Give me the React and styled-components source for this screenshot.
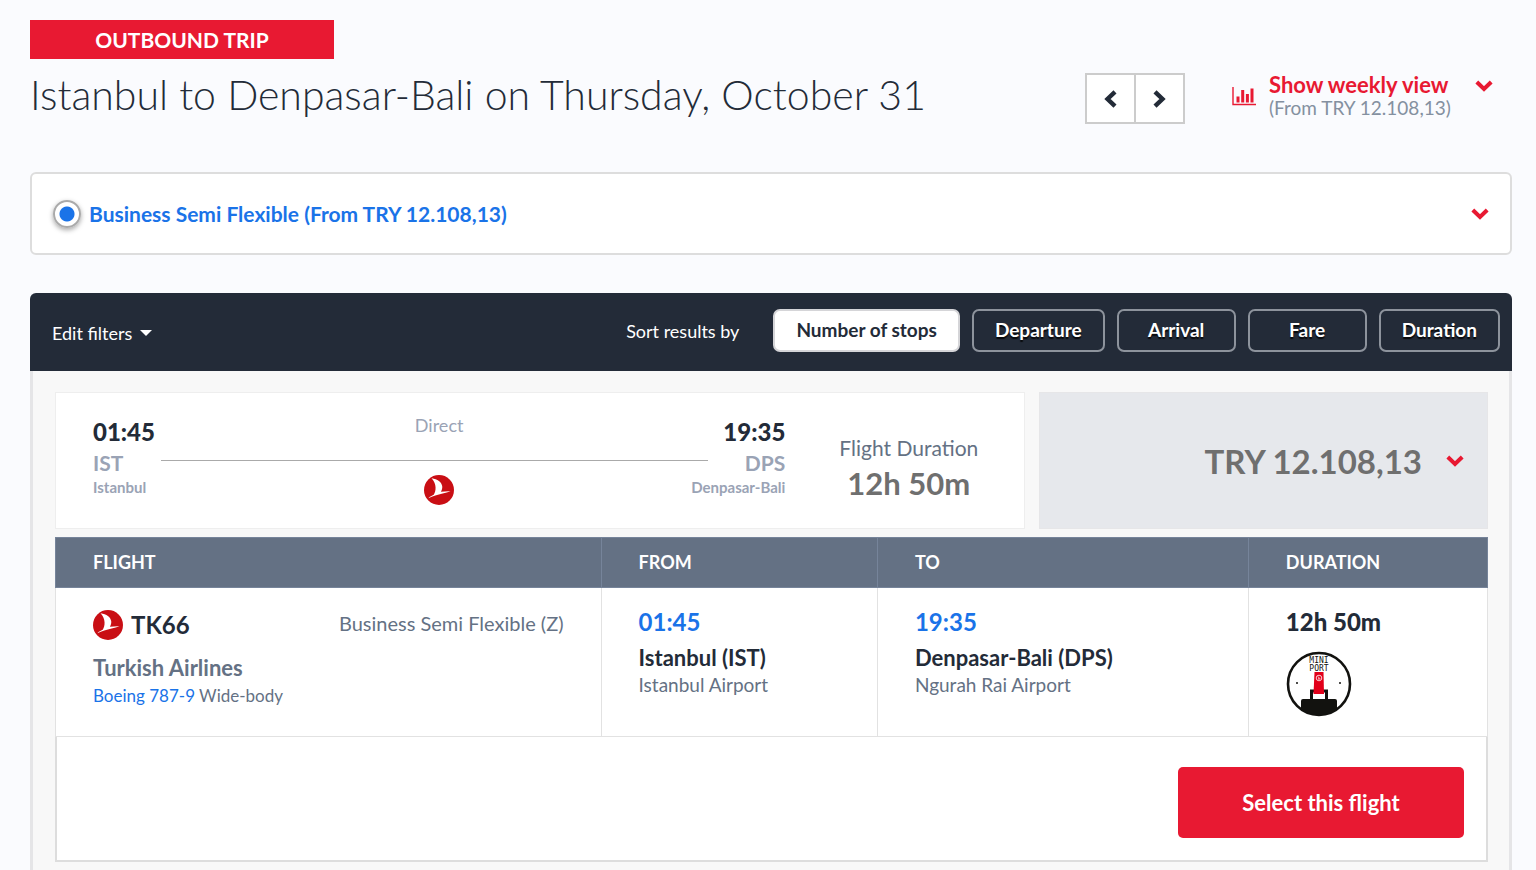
import React, { useState } from 'react';
import styled, { createGlobalStyle, css } from 'styled-components';

const colors = {
    red: '#e81932',
    blue: '#1a73e8',
    navy: '#232b38',
    slate: '#647184',
    muted: '#9aa3b5',
    grey: '#6f6f6f',
};

const sortOptions = ['Number of stops', 'Departure', 'Arrival', 'Fare', 'Duration'];

const ChevronDown = () => (
    <svg width="18" height="12" viewBox="0 0 18 12" aria-hidden="true">
        <path d="M1.8 2 9 9 16.2 2" fill="none" stroke={colors.red} strokeWidth="4" />
    </svg>
);

const ChevronSide = ({ right }) => (
    <svg width="13" height="18" viewBox="0 0 13 18" aria-hidden="true">
        <path
            d={right ? 'M2 1.8 9.5 9 2 16.2' : 'M11 1.8 3.5 9 11 16.2'}
            fill="none"
            stroke={colors.navy}
            strokeWidth="4.4"
        />
    </svg>
);

const ChartIcon = () => (
    <svg width="24" height="19" viewBox="0 0 24 19" aria-hidden="true">
        <path d="M1 0v17.5h23" fill="none" stroke={colors.red} strokeWidth="1.4" />
        <path
            d="M6 15.5v-6M10.7 15.5V3M15.4 15.500V7M20 15.500V1.500"
            fill="none"
            stroke={colors.red}
            strokeWidth="3"
        />
    </svg>
);

const AirlineLogo = () => (
    <svg width="30" height="30" viewBox="0 0 30 30" role="img" aria-label="Turkish Airlines">
        <circle cx="15" cy="15" r="15" fill="#c90e14" />
        <path
            d="M7.6 3.2c6 .8 10 4 10.6 7.8.3 2.2-.3 4-1.3 5.8 3.2-.4 6.3-.8 9.6-.6-2.5.8-5 1.5-7.8 2.3-5.2 1.3-9.7 2.6-14.4 4.7 1.7-1.6 3.5-2.6 5.4-3.4 2.5-3.8 3.2-11-2.1-16.6Z"
            fill="#fff"
        />
    </svg>
);

const MiniPortIcon = () => (
    <svg width="66" height="66" viewBox="0 0 66 66" role="img" aria-label="Mini Port">
        <defs>
            <clipPath id="mini-port-clip">
                <circle cx="33" cy="33" r="31" />
            </clipPath>
        </defs>
        <circle cx="33" cy="33" r="31" fill="#fff" stroke="#12120f" strokeWidth="2.6" />
        <MiniPortText x="33" y="12">MINI</MiniPortText>
        <MiniPortText x="33" y="20">PORT</MiniPortText>
        <path d="M25.5 49V40h15v9" fill="none" stroke="#12120f" strokeWidth="3" />
        <path d="M28.5 21h9l.5 22H27.5Z" fill="#e2001a" />
        <circle cx="33" cy="27" r="2.8" fill="none" stroke="#fff" strokeWidth=".8" />
        <path d="m32 25.500 1.200 1.500-.8 1.200 2-.4" fill="none" stroke="#fff" strokeWidth=".8" />
        <rect x="15" y="48" width="36" height="20" rx="2" fill="#12120f" clipPath="url(#mini-port-clip)" />
        <circle cx="11" cy="32" r="1" fill="#12120f" />
        <circle cx="54" cy="32" r="1" fill="#12120f" />
    </svg>
);

const Header = () => (
    <>
        <TripBadge>OUTBOUND TRIP</TripBadge>
        <HeaderRow>
            <Title>Istanbul to Denpasar-Bali on Thursday, October 31</Title>
            <DayNav>
                <DayButton aria-label="Previous day">
                    <ChevronSide />
                </DayButton>
                <DayButton aria-label="Next day">
                    <ChevronSide right />
                </DayButton>
            </DayNav>
            <WeeklyLink href="#weekly">
                <WeeklyIcon>
                    <ChartIcon />
                </WeeklyIcon>
                <WeeklyText>
                    <strong>Show weekly view</strong>
                    <span>(From TRY 12.108,13)</span>
                </WeeklyText>
                <WeeklyArrow>
                    <ChevronDown />
                </WeeklyArrow>
            </WeeklyLink>
        </HeaderRow>
    </>
);

const FareFilter = () => (
    <FareBox>
        <FareLabel htmlFor="fare-business">
            <Radio id="fare-business" type="radio" name="fare" defaultChecked />
            Business Semi Flexible (From TRY 12.108,13)
        </FareLabel>
        <IconButton aria-label="Show fare options">
            <ChevronDown />
        </IconButton>
    </FareBox>
);

const Toolbar = () => {
    const [sort, setSort] = useState(sortOptions[0]);
    return (
        <ToolbarRow>
            <FilterButton>
                Edit filters
                <Caret />
            </FilterButton>
            <SortLabel>Sort results by</SortLabel>
            <SortGroup>
                {sortOptions.map((option) => (
                    <SortButton key={option} $active={option === sort} onClick={() => setSort(option)}>
                        {option}
                    </SortButton>
                ))}
            </SortGroup>
        </ToolbarRow>
    );
};

const Summary = () => (
    <SummaryRow>
        <RouteCard>
            <Route>
                <Stop>
                    <StopTime>01:45</StopTime>
                    <StopCode>IST</StopCode>
                    <StopCity>Istanbul</StopCity>
                </Stop>
                <Leg>
                    <LegText>Direct</LegText>
                    <LegLine />
                    <LegLogo>
                        <AirlineLogo />
                    </LegLogo>
                </Leg>
                <Stop $end>
                    <StopTime>19:35</StopTime>
                    <StopCode>DPS</StopCode>
                    <StopCity>Denpasar-Bali</StopCity>
                </Stop>
            </Route>
            <Duration>
                <span>Flight Duration</span>
                <strong>12h 50m</strong>
            </Duration>
        </RouteCard>
        <PriceCard>
            TRY 12.108,13
            <ChevronDown />
        </PriceCard>
    </SummaryRow>
);

const FlightDetails = () => (
    <>
        <Table>
            <thead>
                <tr>
                    <Th $width="38.1%">FLIGHT</Th>
                    <Th $width="19.3%">FROM</Th>
                    <Th $width="25.9%">TO</Th>
                    <Th $width="16.7%">DURATION</Th>
                </tr>
            </thead>
            <tbody>
                <tr>
                    <Td>
                        <FlightTop>
                            <FlightNumber>
                                <AirlineLogo />
                                TK66
                            </FlightNumber>
                            <FareClass>Business Semi Flexible (Z)</FareClass>
                        </FlightTop>
                        <Airline>Turkish Airlines</Airline>
                        <Aircraft>
                            <a href="#aircraft">Boeing 787-9</a> Wide-body
                        </Aircraft>
                    </Td>
                    <Td>
                        <Time>01:45</Time>
                        <City>Istanbul (IST)</City>
                        <Airport>Istanbul Airport</Airport>
                    </Td>
                    <Td>
                        <Time>19:35</Time>
                        <City>Denpasar-Bali (DPS)</City>
                        <Airport>Ngurah Rai Airport</Airport>
                    </Td>
                    <Td>
                        <TotalTime>12h 50m</TotalTime>
                        <MiniPortIcon />
                    </Td>
                </tr>
            </tbody>
        </Table>
        <Actions>
            <SelectButton>Select this flight</SelectButton>
        </Actions>
    </>
);

const App = () => (
    <>
        <GlobalStyle />
        <Page>
            <Header />
            <FareFilter />
            <Results>
                <Toolbar />
                <ResultsBody>
                    <Summary />
                    <FlightDetails />
                </ResultsBody>
            </Results>
        </Page>
    </>
);
export default App;

const GlobalStyle = createGlobalStyle`
    * {
        box-sizing: border-box;
    }
    body {
        margin: 0;
        background: #fafbfe;
        color: ${colors.navy};
        font-family: Lato, 'Open Sans', sans-serif;
    }
    button {
        font-family: inherit;
        cursor: pointer;
    }
    svg {
        display: block;
        flex-shrink: 0;
    }
`;

const MiniPortText = styled.text`
    font-family: 'DejaVu Sans Mono', monospace;
    font-size: 8px;
    text-anchor: middle;
    fill: #12120f;
`;

const Page = styled.main`
    padding: 20px 24px 0 30px;
`;
const TripBadge = styled.div`
    width: 304px;
    line-height: 39px;
    background: ${colors.red};
    color: white;
    font-size: 21px;
    font-weight: 700;
    text-align: center;
`;
const HeaderRow = styled.header`
    display: flex;
    align-items: flex-start;
    padding: 10px 19px 0 0;
    margin-bottom: 48px;
`;
const Title = styled.h1`
    flex: 1;
    margin: 0;
    font-size: 41px;
    line-height: 52px;
    font-weight: 300;
    white-space: nowrap;
`;
const DayNav = styled.div`
    display: flex;
    margin-top: 4px;
`;
const DayButton = styled.button`
    display: flex;
    align-items: center;
    justify-content: center;
    width: 51px;
    height: 51px;
    padding: 0;
    border: 2px solid #ccc;
    background: white;
    & + & {
        margin-left: -2px;
    }
`;
const WeeklyLink = styled.a`
    display: flex;
    align-items: flex-start;
    margin: 4px 0 0 47px;
    color: ${colors.red};
    text-decoration: none;
`;
const WeeklyIcon = styled.span`
    padding: 14px 13px 0 0;
`;
const WeeklyText = styled.span`
    display: flex;
    flex-direction: column;
    width: 206px;
    font-size: 19px;
    line-height: 23px;
    white-space: nowrap;
    strong {
        font-size: 22px;
        font-weight: 700;
    }
    span {
        color: #8490a0;
    }
`;
const WeeklyArrow = styled.span`
    padding-top: 7px;
`;

const FareBox = styled.section`
    display: flex;
    align-items: center;
    justify-content: space-between;
    height: 83px;
    padding: 0 21px;
    margin-bottom: 38px;
    border: 2px solid #ddd;
    border-radius: 6px;
    background: white;
`;
const FareLabel = styled.label`
    display: flex;
    align-items: center;
    gap: 8px;
    color: ${colors.blue};
    font-size: 21px;
    font-weight: 700;
`;
const Radio = styled.input`
    appearance: none;
    width: 28px;
    height: 28px;
    margin: 0;
    border: 2px solid #aaa;
    border-radius: 50%;
    background: radial-gradient(circle, ${colors.blue} 7px, white 8px);
    box-shadow: 0 2px 5px rgba(0, 0, 0, 0.35);
`;
const IconButton = styled.button`
    padding: 0;
    border: none;
    background: transparent;
`;

const Results = styled.section`
    border-radius: 6px 6px 0 0;
    overflow: hidden;
`;
const ToolbarRow = styled.div`
    display: flex;
    align-items: center;
    height: 78px;
    padding: 0 12px 3px 22px;
    background: ${colors.navy};
    color: white;
`;
const FilterButton = styled.button`
    display: flex;
    align-items: center;
    gap: 8px;
    padding: 4px 0 0;
    margin-right: auto;
    border: none;
    background: transparent;
    color: white;
    font-size: 18px;
    line-height: 24px;
`;
const Caret = styled.span`
    border: 6px solid transparent;
    border-top-color: white;
    border-bottom: none;
`;
const SortLabel = styled.span`
    margin-right: 34px;
    font-size: 18px;
    line-height: 24px;
`;
const SortGroup = styled.div`
    display: flex;
    gap: 12px;
`;
const SortButton = styled.button`
    min-width: 119px;
    height: 43px;
    padding: 0 21px 2px;
    border: 2px solid #8d939c;
    border-radius: 7px;
    background: transparent;
    color: white;
    font-size: 19px;
    font-weight: 700;
    text-shadow: 0 2px 1px rgba(0, 0, 0, 0.8);
    ${({ $active }) =>
        $active &&
        css`
            border-color: #d5d5d8;
            background: white;
            color: ${colors.navy};
            text-shadow: none;
        `}
`;
const ResultsBody = styled.div`
    padding: 21px 21px 9px 22px;
    border: solid #e5e5e7;
    border-width: 0 3px;
    background: #f8f8f8;
`;

const SummaryRow = styled.div`
    display: grid;
    grid-template-columns: 971fr 449fr;
    gap: 14px;
    margin-bottom: 8px;
`;
const RouteCard = styled.div`
    display: flex;
    height: 137px;
    border: 1px solid #eee;
    background: white;
`;
const Route = styled.div`
    display: grid;
    flex: 1;
    grid-template-columns: 68px 1fr 77px;
    padding: 22px 0 0 37px;
`;
const Stop = styled.div`
    display: flex;
    flex-direction: column;
    align-items: ${({ $end }) => ($end ? 'flex-end' : 'flex-start')};
    color: ${colors.muted};
    font-weight: 700;
    white-space: nowrap;
`;
const StopTime = styled.strong`
    color: ${colors.navy};
    font-size: 24px;
    line-height: 34px;
`;
const StopCode = styled.span`
    font-size: 21px;
    line-height: 28px;
`;
const StopCity = styled.span`
    font-size: 15px;
    line-height: 20px;
`;
const Leg = styled.div`
    display: flex;
    flex-direction: column;
`;
const LegText = styled.span`
    padding-left: 9px;
    color: ${colors.muted};
    font-size: 18px;
    line-height: 20px;
    text-align: center;
`;
const LegLine = styled.span`
    margin: 25px 0 14px;
    border-top: 1px solid #aaa;
`;
const LegLogo = styled.span`
    display: flex;
    justify-content: center;
    padding-left: 9px;
`;
const Duration = styled.div`
    display: flex;
    flex-direction: column;
    align-items: center;
    width: 239px;
    padding: 41px 0 0 8px;
    color: ${colors.slate};
    font-size: 21px;
    line-height: 28px;
    strong {
        color: ${colors.grey};
        font-size: 31px;
        line-height: 42px;
    }
`;
const PriceCard = styled.button`
    display: flex;
    align-items: center;
    justify-content: flex-end;
    gap: 24px;
    padding: 0 23px 0 0;
    border: 1px solid #e6e6e8;
    background: #e6e8ec;
    color: ${colors.grey};
    font-size: 33px;
    font-weight: 700;
`;

const Table = styled.table`
    width: 100%;
    border-collapse: collapse;
    table-layout: fixed;
    background: white;
`;
const Th = styled.th`
    width: ${({ $width }) => $width};
    height: 50px;
    padding: 0 37px 2px;
    border: 1px solid #76849a;
    background: ${colors.slate};
    color: white;
    font-size: 18px;
    font-weight: 700;
    text-align: left;
`;
const Td = styled.td`
    height: 149px;
    padding: 20px 37px 0;
    border: 1px solid #e2e2e2;
    vertical-align: top;
`;
const FlightTop = styled.div`
    display: flex;
    justify-content: space-between;
    margin-bottom: 12px;
`;
const FlightNumber = styled.strong`
    display: flex;
    align-items: center;
    gap: 8px;
    font-size: 24px;
    line-height: 34px;
`;
const FareClass = styled.span`
    color: ${colors.slate};
    font-size: 20px;
    line-height: 30px;
`;
const Airline = styled.div`
    color: ${colors.slate};
    font-size: 22px;
    font-weight: 700;
    line-height: 28px;
`;
const Aircraft = styled.div`
    color: ${colors.slate};
    font-size: 17px;
    line-height: 28px;
    a {
        color: ${colors.blue};
        text-decoration: none;
    }
`;
const Time = styled.div`
    margin-bottom: 8px;
    color: ${colors.blue};
    font-size: 24px;
    font-weight: 700;
    line-height: 28px;
`;
const City = styled.div`
    font-size: 22px;
    font-weight: 700;
    line-height: 28px;
`;
const Airport = styled.div`
    color: ${colors.slate};
    font-size: 19px;
    line-height: 26px;
`;
const TotalTime = styled(Time)`
    margin-bottom: 15px;
    color: ${colors.navy};
    font-size: 24px;
    font-weight: 900;
`;
const Actions = styled.div`
    display: flex;
    justify-content: flex-end;
    padding: 30px 22px 22px;
    border: 2px solid #ddd;
    border-top: none;
    background: white;
`;
const SelectButton = styled.button`
    width: 286px;
    height: 71px;
    border: none;
    border-radius: 5px;
    background: ${colors.red};
    color: white;
    font-size: 22px;
    font-weight: 700;
`;
